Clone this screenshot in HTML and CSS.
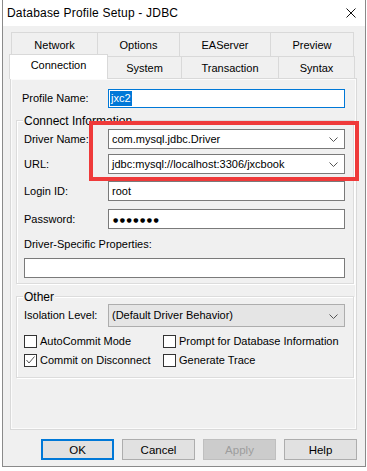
FILE: index.html
```html
<!DOCTYPE html>
<html lang="en">
<head>
    <meta charset="UTF-8">
    <title>Database Profile Setup - JDBC</title>
    <link rel="stylesheet" href="styles.css">
</head>
<body>
    <div class="window">
        <div class="titlebar">
            <span class="title">Database Profile Setup - JDBC</span>
            <svg class="close" width="10" height="10" viewBox="0 0 10 10"><path d="M0.5 0.5L9.5 9.5M9.5 0.5L0.5 9.5" stroke="#111" stroke-width="1"/></svg>
        </div>

        <div class="tabs">
            <div class="tab-row back">
                <div class="tab w86">Network</div>
                <div class="tab w82">Options</div>
                <div class="tab w91">EAServer</div>
                <div class="tab w84 last">Preview</div>
            </div>
            <div class="tab-row front">
                <div class="tab selected">Connection</div>
                <div class="tab w73">System</div>
                <div class="tab w97">Transaction</div>
                <div class="tab w77 last">Syntax</div>
            </div>
        </div>

        <div class="panel">
            <div class="row profile-row">
                <label class="lbl">Profile Name:</label>
                <div class="field focus"><span class="sel">jxc2</span></div>
            </div>

            <div class="group connect">
                <div class="group-title">Connect Information</div>
                <div class="row r-driver">
                    <label class="lbl">Driver Name:</label>
                    <div class="field combo">com.mysql.jdbc.Driver<svg class="chev" width="9" height="5" viewBox="0 0 9 5"><path d="M0.5 0.5L4.5 4.5L8.5 0.5" fill="none" stroke="#555"/></svg></div>
                </div>
                <div class="row r-url">
                    <label class="lbl">URL:</label>
                    <div class="field combo">jdbc:mysql://localhost:3306/jxcbook<svg class="chev" width="9" height="5" viewBox="0 0 9 5"><path d="M0.5 0.5L4.5 4.5L8.5 0.5" fill="none" stroke="#555"/></svg></div>
                </div>
                <div class="row r-login">
                    <label class="lbl">Login ID:</label>
                    <div class="field">root</div>
                </div>
                <div class="row r-pass">
                    <label class="lbl">Password:</label>
                    <div class="field dots">●●●●●●●</div>
                </div>
                <div class="dsp-label">Driver-Specific Properties:</div>
                <div class="field wide"></div>
            </div>

            <div class="group other">
                <div class="group-title">Other</div>
                <div class="row r-iso">
                    <label class="lbl">Isolation Level:</label>
                    <div class="field combo dropdown">(Default Driver Behavior)<svg class="chev" width="9" height="5" viewBox="0 0 9 5"><path d="M0.5 0.5L4.5 4.5L8.5 0.5" fill="none" stroke="#555"/></svg></div>
                </div>
                <div class="checks">
                    <div class="check"><span class="box"></span>AutoCommit Mode</div>
                    <div class="check"><span class="box"></span>Prompt for Database Information</div>
                    <div class="check"><span class="box"><svg width="11" height="11" viewBox="0 0 11 11"><path d="M1.5 5L4 8L9.5 1.5" fill="none" stroke="#555" stroke-width="1"/></svg></span>Commit on Disconnect</div>
                    <div class="check"><span class="box"></span>Generate Trace</div>
                </div>
            </div>
        </div>

        <div class="buttons">
            <button class="btn default">OK</button>
            <button class="btn">Cancel</button>
            <button class="btn" disabled>Apply</button>
            <button class="btn">Help</button>
        </div>

        <div class="highlight"></div>
    </div>
</body>
</html>
```

FILE: styles.css
```css
body { margin: 0; background: #ffffff; font-family: "Liberation Sans", Arial, sans-serif; font-size: 11px; color: #000; }

.window {
    position: relative;
    margin-left: 2px;
    width: 364px;
    height: 467px;
    box-sizing: border-box;
    border: 1px solid #8a8a8a;
    border-top: none;
    background: #f0f0f0;
}

.titlebar { height: 26px; background: #fff; display: flex; align-items: center; padding: 0 9px 0 4px; }
.title { font-size: 12px; flex: 1; padding-bottom: 1px; letter-spacing: 0.2px; }

/* tabs */
.tabs { margin: 6px 0 0 7px; width: 347px; position: relative; z-index: 1; }
.tab-row { display: flex; }
.tab-row.back { height: 24px; padding-left: 1px; }
.tab-row.front { height: 22px; }
.tab {
    box-sizing: border-box;
    border: 1px solid #d9d9d9;
    border-bottom: none;
    border-right: none;
    display: flex;
    align-items: center;
    justify-content: center;
    background: #f0f0f0;
    line-height: 13px;
}
.tab.last { border-right: 1px solid #d9d9d9; }
.back .tab { height: 24px; padding-top: 1px; }
.front .tab { height: 22px; padding-top: 1px; }
.front .tab.selected {
    width: 99px;
    height: 25px;
    margin: -2px 0 -1px -1px;
    background: #fff;
    border-right: 1px solid #d9d9d9;
    padding-top: 0;
    padding-bottom: 3px;
}
.front .tab.selected + .tab { border-left: none; }
.w73 { width: 73px; } .w77 { width: 77px; } .w82 { width: 82px; } .w84 { width: 84px; }
.w86 { width: 86px; } .w91 { width: 91px; } .w97 { width: 97px; }

/* page */
.panel {
    box-sizing: border-box;
    margin-left: 7px;
    width: 347px;
    height: 352px;
    border: 1px solid #d9d9d9;
    box-shadow: inset 0 0 0 1px #fbfbfb;
    padding: 10px 2px 0 5px;
}

.row { display: flex; align-items: center; line-height: 13px; }
.lbl { width: 84px; flex: none; }
.profile-row { padding-left: 6px; }
.profile-row .lbl { width: 86px; }

.field {
    box-sizing: border-box;
    width: 237px;
    height: 20px;
    background: #fff;
    border: 1px solid #7a7a7a;
    display: flex;
    align-items: center;
    padding-left: 3px;
    font-size: 11px;
    line-height: 13px;
}
.field.focus { height: 19px; border-color: #0078d7; padding-left: 1px; }
.sel { background: #0078d7; color: #fff; padding: 0 1px; line-height: 15px; }
.combo { position: relative; }
.chev { position: absolute; right: 6px; top: 7px; }
.dots { font-family: "DejaVu Sans", sans-serif; font-size: 6px; letter-spacing: 1.5px; padding-left: 4px; }

.group {
    border: 1px solid #dcdcdc;
    box-shadow: 1px 1px 0 #fff, inset 1px 1px 0 #fff;
    padding: 0 8px 5px 7px;
}
.group-title {
    width: fit-content;
    height: 14px;
    line-height: 14px;
    margin: -7px 0 0 -1px;
    padding: 0 1px;
    background: #f0f0f0;
    font-size: 12px;
}
.connect { margin-top: 12px; }
.r-driver { margin-top: 1px; }
.r-url { margin-top: 5px; }
.r-login { margin-top: 7px; }
.r-pass { margin-top: 8px; }
.dsp-label { margin-top: 8px; height: 14px; line-height: 14px; }
.field.wide { width: 321px; margin-top: 7px; }

.other { margin-top: 12px; padding-bottom: 10px; }
.r-iso { margin-top: 0; }
.dropdown { height: 23px; background: #e5e5e5; border-color: #adadad; }
.dropdown .chev { top: 9px; }
.checks { display: grid; grid-template-columns: 139px auto; row-gap: 6px; margin-top: 8px; }
.check { display: flex; align-items: center; height: 13px; line-height: 13px; }
.box {
    box-sizing: border-box;
    width: 13px;
    height: 13px;
    border: 1px solid #333;
    background: #fff;
    margin-right: 3px;
    flex: none;
    display: flex;
    align-items: center;
    justify-content: center;
}

/* buttons */
.buttons { display: flex; gap: 8px; padding: 9px 0 0 38px; }
.btn {
    box-sizing: border-box;
    width: 73px;
    height: 21px;
    background: #e1e1e1;
    border: 1px solid #adadad;
    font-family: "Liberation Sans", Arial, sans-serif;
    font-size: 11.5px;
    color: #000;
    padding: 0;
}
.btn.default { border: 2px solid #0078d7; }
.btn:disabled { background: #cccccc; border-color: #bfbfbf; color: #9d9d9d; }

/* red annotation box drawn over the dialog */
.highlight {
    position: absolute;
    left: 86px;
    top: 121px;
    width: 270px;
    height: 60px;
    box-sizing: border-box;
    border: 4px solid #ef3a3a;
    z-index: 2;
}
```
